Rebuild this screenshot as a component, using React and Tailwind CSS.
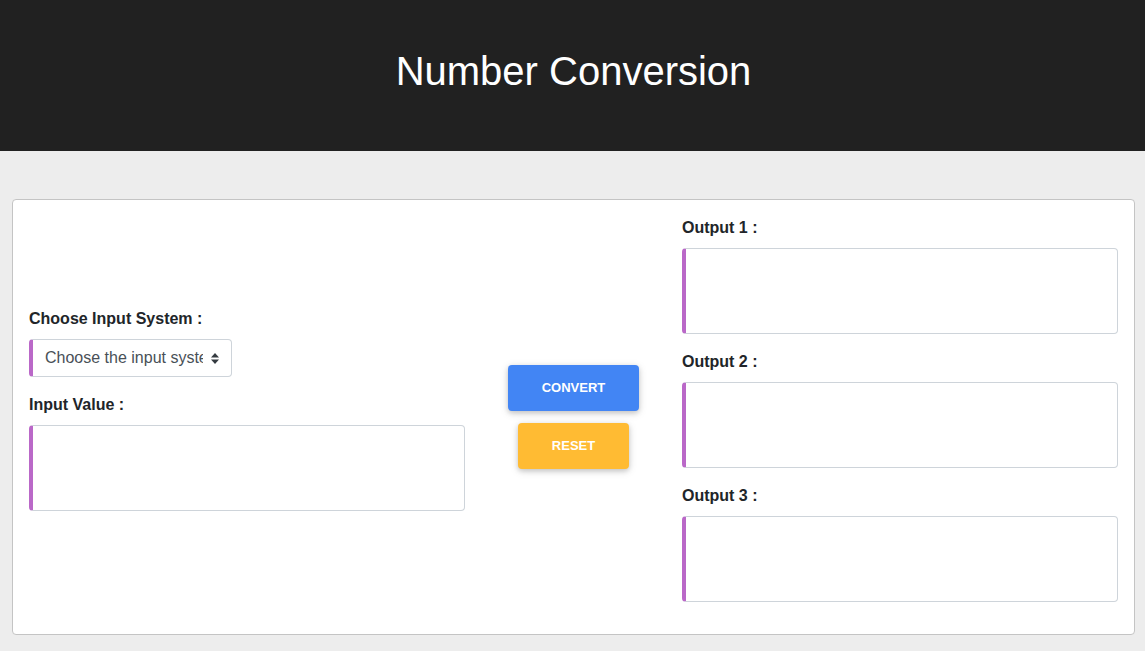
import React from 'react';

const Field = ({ label }) => (
  <div className="mb-4">
    <label className="block text-base leading-6 font-bold text-[#212529] mb-2">{label}</label>
    <div className="h-[86px] bg-white border border-[#ced4da] border-l-4 border-l-[#ba68c8] rounded"></div>
  </div>
);

const App = () => {
  return (
    <div className="min-h-screen bg-[#ededed] font-['Liberation_Sans',Arial,sans-serif]">
      <header className="h-[151px] bg-[#212121] flex items-center justify-center">
        <h1 className="text-[40px] leading-none text-white pb-[9px] pl-[2px]">Number Conversion</h1>
      </header>

      <div className="pl-3 pr-[10px] pt-12">
        <div className="bg-white border border-[#c4c4c4] rounded p-4 grid grid-cols-[436px_1fr_436px] items-center">
          {/* Input side */}
          <div>
            <div className="mb-4">
              <label className="block text-base leading-6 font-bold text-[#212529] mb-2">Choose Input System :</label>
              <div className="relative w-[203px] h-[38px] bg-white border border-[#ced4da] border-l-4 border-l-[#ba68c8] rounded flex items-center pl-3 pr-7 overflow-hidden">
                <span className="text-base text-[#495057] whitespace-nowrap overflow-hidden">Choose the input system</span>
                <svg className="absolute right-[12px] top-[13px]" width="8" height="11" viewBox="0 0 8 11">
                  <path d="M4 0 L8 4.5 L0 4.5 Z" fill="#343a40" />
                  <path d="M0 6.5 L8 6.5 L4 11 Z" fill="#343a40" />
                </svg>
              </div>
            </div>
            <Field label="Input Value :" />
          </div>

          {/* Actions */}
          <div className="flex flex-col items-center gap-3">
            <button className="h-[46px] w-[131px] bg-[#4285f4] text-white text-[13px] font-bold uppercase rounded-sm shadow-[0_2px_5px_0_rgba(0,0,0,0.16),0_2px_10px_0_rgba(0,0,0,0.12)]">
              Convert
            </button>
            <button className="h-[46px] w-[111px] bg-[#ffbb33] text-white text-[13px] font-bold uppercase rounded-sm shadow-[0_2px_5px_0_rgba(0,0,0,0.16),0_2px_10px_0_rgba(0,0,0,0.12)]">
              Reset
            </button>
          </div>

          {/* Outputs */}
          <div>
            <Field label="Output 1 :" />
            <Field label="Output 2 :" />
            <Field label="Output 3 :" />
          </div>
        </div>
      </div>
    </div>
  );
};

export default App;
